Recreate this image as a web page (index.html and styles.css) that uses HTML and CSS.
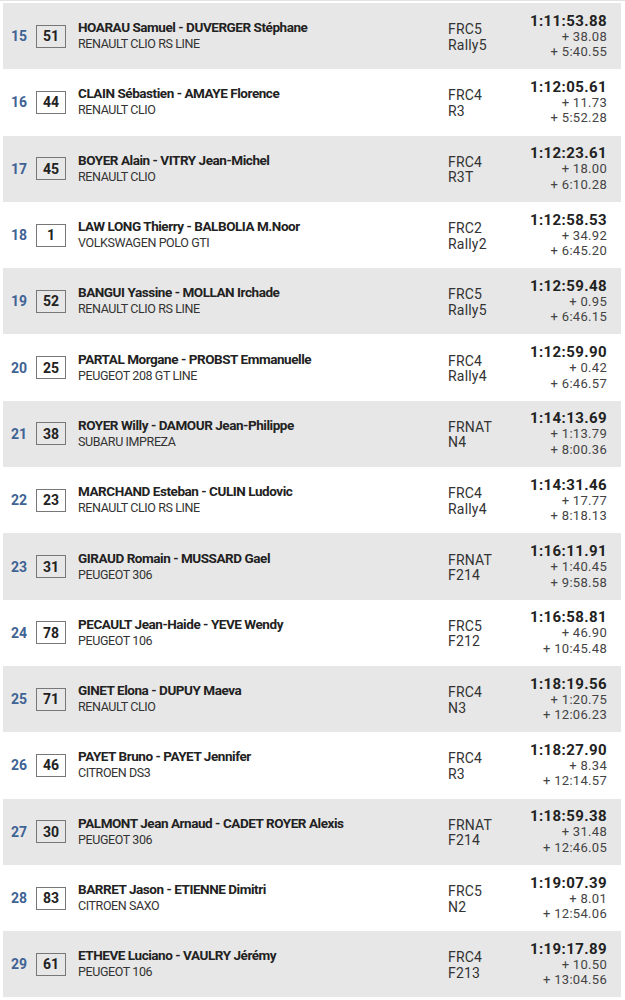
FILE: index.html
```html
<!DOCTYPE html>
<html lang="fr">
<head>
<meta charset="utf-8">
<link rel="stylesheet" href="styles.css">
</head>
<body>
<div class="list">
  <div class="row odd"><div class="rank">15</div><div class="num">51</div><div class="crew"><div class="name">HOARAU Samuel - DUVERGER Stéphane</div><div class="car">RENAULT CLIO RS LINE</div></div><div class="cls"><div>FRC5</div><div>Rally5</div></div><div class="time"><div class="t">1:11:53.88</div><div class="d">+ 38.08</div><div class="d">+ 5:40.55</div></div></div>
  <div class="row"><div class="rank">16</div><div class="num">44</div><div class="crew"><div class="name">CLAIN Sébastien - AMAYE Florence</div><div class="car">RENAULT CLIO</div></div><div class="cls"><div>FRC4</div><div>R3</div></div><div class="time"><div class="t">1:12:05.61</div><div class="d">+ 11.73</div><div class="d">+ 5:52.28</div></div></div>
  <div class="row odd"><div class="rank">17</div><div class="num">45</div><div class="crew"><div class="name">BOYER Alain - VITRY Jean-Michel</div><div class="car">RENAULT CLIO</div></div><div class="cls"><div>FRC4</div><div>R3T</div></div><div class="time"><div class="t">1:12:23.61</div><div class="d">+ 18.00</div><div class="d">+ 6:10.28</div></div></div>
  <div class="row"><div class="rank">18</div><div class="num">1</div><div class="crew"><div class="name">LAW LONG Thierry - BALBOLIA M.Noor</div><div class="car">VOLKSWAGEN POLO GTI</div></div><div class="cls"><div>FRC2</div><div>Rally2</div></div><div class="time"><div class="t">1:12:58.53</div><div class="d">+ 34.92</div><div class="d">+ 6:45.20</div></div></div>
  <div class="row odd"><div class="rank">19</div><div class="num">52</div><div class="crew"><div class="name">BANGUI Yassine - MOLLAN Irchade</div><div class="car">RENAULT CLIO RS LINE</div></div><div class="cls"><div>FRC5</div><div>Rally5</div></div><div class="time"><div class="t">1:12:59.48</div><div class="d">+ 0.95</div><div class="d">+ 6:46.15</div></div></div>
  <div class="row"><div class="rank">20</div><div class="num">25</div><div class="crew"><div class="name">PARTAL Morgane - PROBST Emmanuelle</div><div class="car">PEUGEOT 208 GT LINE</div></div><div class="cls"><div>FRC4</div><div>Rally4</div></div><div class="time"><div class="t">1:12:59.90</div><div class="d">+ 0.42</div><div class="d">+ 6:46.57</div></div></div>
  <div class="row odd"><div class="rank">21</div><div class="num">38</div><div class="crew"><div class="name">ROYER Willy - DAMOUR Jean-Philippe</div><div class="car">SUBARU IMPREZA</div></div><div class="cls"><div>FRNAT</div><div>N4</div></div><div class="time"><div class="t">1:14:13.69</div><div class="d">+ 1:13.79</div><div class="d">+ 8:00.36</div></div></div>
  <div class="row"><div class="rank">22</div><div class="num">23</div><div class="crew"><div class="name">MARCHAND Esteban - CULIN Ludovic</div><div class="car">RENAULT CLIO RS LINE</div></div><div class="cls"><div>FRC4</div><div>Rally4</div></div><div class="time"><div class="t">1:14:31.46</div><div class="d">+ 17.77</div><div class="d">+ 8:18.13</div></div></div>
  <div class="row odd"><div class="rank">23</div><div class="num">31</div><div class="crew"><div class="name">GIRAUD Romain - MUSSARD Gael</div><div class="car">PEUGEOT 306</div></div><div class="cls"><div>FRNAT</div><div>F214</div></div><div class="time"><div class="t">1:16:11.91</div><div class="d">+ 1:40.45</div><div class="d">+ 9:58.58</div></div></div>
  <div class="row"><div class="rank">24</div><div class="num">78</div><div class="crew"><div class="name">PECAULT Jean-Haide - YEVE Wendy</div><div class="car">PEUGEOT 106</div></div><div class="cls"><div>FRC5</div><div>F212</div></div><div class="time"><div class="t">1:16:58.81</div><div class="d">+ 46.90</div><div class="d">+ 10:45.48</div></div></div>
  <div class="row odd"><div class="rank">25</div><div class="num">71</div><div class="crew"><div class="name">GINET Elona - DUPUY Maeva</div><div class="car">RENAULT CLIO</div></div><div class="cls"><div>FRC4</div><div>N3</div></div><div class="time"><div class="t">1:18:19.56</div><div class="d">+ 1:20.75</div><div class="d">+ 12:06.23</div></div></div>
  <div class="row"><div class="rank">26</div><div class="num">46</div><div class="crew"><div class="name">PAYET Bruno - PAYET Jennifer</div><div class="car">CITROEN DS3</div></div><div class="cls"><div>FRC4</div><div>R3</div></div><div class="time"><div class="t">1:18:27.90</div><div class="d">+ 8.34</div><div class="d">+ 12:14.57</div></div></div>
  <div class="row odd"><div class="rank">27</div><div class="num">30</div><div class="crew"><div class="name">PALMONT Jean Arnaud - CADET ROYER Alexis</div><div class="car">PEUGEOT 306</div></div><div class="cls"><div>FRNAT</div><div>F214</div></div><div class="time"><div class="t">1:18:59.38</div><div class="d">+ 31.48</div><div class="d">+ 12:46.05</div></div></div>
  <div class="row"><div class="rank">28</div><div class="num">83</div><div class="crew"><div class="name">BARRET Jason - ETIENNE Dimitri</div><div class="car">CITROEN SAXO</div></div><div class="cls"><div>FRC5</div><div>N2</div></div><div class="time"><div class="t">1:19:07.39</div><div class="d">+ 8.01</div><div class="d">+ 12:54.06</div></div></div>
  <div class="row odd"><div class="rank">29</div><div class="num">61</div><div class="crew"><div class="name">ETHEVE Luciano - VAULRY Jérémy</div><div class="car">PEUGEOT 106</div></div><div class="cls"><div>FRC4</div><div>F213</div></div><div class="time"><div class="t">1:19:17.89</div><div class="d">+ 10.50</div><div class="d">+ 13:04.56</div></div></div>
</div>
</body>
</html>
```

FILE: styles.css
```css
html, body {
  margin: 0;
  padding: 0;
  background: #ffffff;
}
body {
  font-family: Roboto, "Liberation Sans", sans-serif;
  color: #222;
  border-top: 1px solid #e2e2e2;
}
.list {
  padding: 2px 4px 0 3px;
}
.row {
  display: flex;
  align-items: center;
  height: 66.3px;
  box-sizing: border-box;
}
.row.odd {
  background: #e7e7e7;
}
.rank {
  width: 33px;
  padding-left: 8px;
  box-sizing: border-box;
  font-size: 14px;
  font-weight: 700;
  color: #3f6394;
}
.num {
  width: 28px;
  height: 21px;
  border: 1px solid #777;
  display: flex;
  align-items: center;
  justify-content: center;
  font-size: 14px;
  font-weight: 700;
  color: #222;
  margin-right: 12px;
}
.crew {
  flex: 1;
  display: flex;
  flex-direction: column;
  gap: 1px;
  padding-bottom: 2px;
}
.name {
  font-size: 13.5px;
  font-weight: 700;
  letter-spacing: -0.45px;
  color: #222;
  line-height: 16px;
}
.car {
  font-size: 12.5px;
  letter-spacing: -0.4px;
  color: #333;
  line-height: 15px;
}
.cls {
  width: 63px;
  font-size: 14px;
  letter-spacing: 0.2px;
  color: #333;
  line-height: 15.5px;
  display: flex;
  flex-direction: column;
  padding-top: 3px;
}
.time {
  width: 96px;
  padding-right: 14px;
  text-align: right;
  display: flex;
  flex-direction: column;
}
.t {
  font-size: 15px;
  font-weight: 700;
  letter-spacing: 0.4px;
  color: #222;
  line-height: 16px;
}
.d {
  font-size: 13px;
  letter-spacing: 0.3px;
  color: #444;
  line-height: 15.5px;
}
```
